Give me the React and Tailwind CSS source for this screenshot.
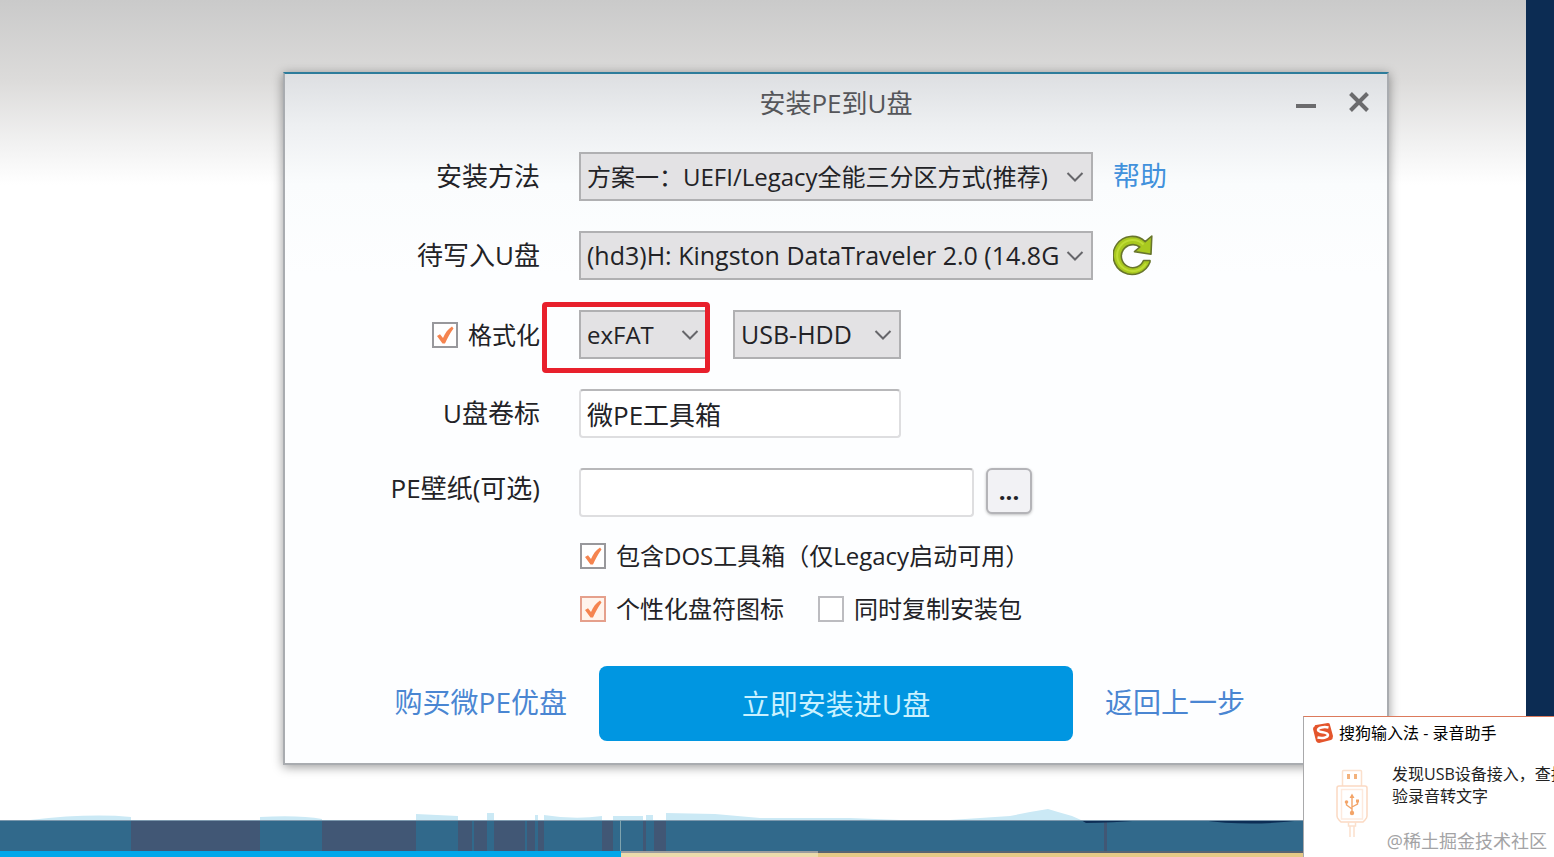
import { useState } from "react";

const methods = ["方案一：UEFI/Legacy全能三分区方式(推荐)"];
const drives = ["(hd3)H: Kingston DataTraveler 2.0 (14.8G"];

// darker blocks on the desktop strip: [x, width]
const shades = [
  [131, 129],
  [322, 94],
  [458, 14],
  [474, 13],
  [494, 31],
  [527, 8],
  [538, 6],
  [602, 11],
  [643, 3],
  [654, 12],
  [1104, 3],
];

function Select({ id, label, options, className }) {
  return (
    <div className={`relative ${className}`}>
      <select
        id={id}
        aria-label={label}
        className="block h-[49px] w-full appearance-none rounded-none border-2 border-[#b0b0b2] bg-[#e3e2e4] pl-1.5 pr-7 outline-none"
      >
        {options.map((option) => (
          <option key={option}>{option}</option>
        ))}
      </select>
      <svg
        viewBox="0 0 18 10"
        className="pointer-events-none absolute right-[9px] top-5 h-2.5 w-[18px]"
        fill="none"
        stroke="#66666a"
        strokeWidth="2"
      >
        <path d="M1.5 1 L9 8.5 L16.5 1" />
      </svg>
    </div>
  );
}

function Checkbox({ label, defaultChecked = false, tone = "border-[#98989c] bg-white" }) {
  const [checked, setChecked] = useState(defaultChecked);

  return (
    <label className="flex items-center gap-2.5 whitespace-nowrap text-2xl leading-[26px]">
      <span className="relative size-[26px] shrink-0">
        <input
          type="checkbox"
          checked={checked}
          onChange={(e) => setChecked(e.target.checked)}
          className={`block size-[26px] appearance-none border-2 ${tone}`}
        />
        {checked && (
          <svg viewBox="0 0 26 26" className="pointer-events-none absolute inset-0 size-[26px]">
            <path
              d="M5 14 L8 12.2 L11 16 C13 11 16 7 20 4.5 L21.5 6.5 C18 11 15.5 16 13 21.5 L10.5 21.5 Z"
              fill="#f5844f"
            />
          </svg>
        )}
      </span>
      {label}
    </label>
  );
}

function RefreshIcon() {
  return (
    <svg viewBox="0 0 40 41" className="h-[41px] w-10">
      <path
        d="M37 27 A19 19 0 1 1 32.2 6.6 L38.8 1 L38 19.2 L21.5 16.6 L26.8 12 A11.5 11.5 0 1 0 30.5 25.5 L37 25.5 Z"
        fill="#a9c91f"
        stroke="#68752c"
        strokeWidth="1.6"
        strokeLinejoin="round"
      />
      <path
        d="M33 28.5 A15.5 15.5 0 1 1 30.5 9.5"
        fill="none"
        stroke="#bfdc35"
        strokeWidth="2"
      />
    </svg>
  );
}

function Installer() {
  return (
    <section className="ml-[283px] mr-[137px] mt-[72px] border-2 border-[#a9acb0] border-t-[#2d7c9b] bg-[linear-gradient(to_bottom,#dddfe2_0px,#edeff1_50px,#fafcfd_110px,#fdfeff_200px)] pb-[22px] shadow-[0_2px_10px_rgba(0,0,0,0.4)]">
      <header className="grid h-[58px] grid-cols-[1fr_auto_1fr] items-center">
        <h1 className="col-start-2 text-[26px] text-[#55565a]">安装PE到U盘</h1>
        <div className="flex items-center justify-end gap-7 pr-4">
          <button type="button" aria-label="最小化" className="size-6">
            <svg viewBox="0 0 24 24" className="size-6" stroke="#6b6b6d" strokeWidth="4">
              <path d="M1 15 H21" />
            </svg>
          </button>
          <button type="button" aria-label="关闭" className="size-6">
            <svg viewBox="0 0 24 24" className="size-6" stroke="#6b6b6d" strokeWidth="4">
              <path d="M3.500 2.500 L20.500 19.500 M20.500 2.500 L3.500 19.500" />
            </svg>
          </button>
        </div>
      </header>

      <div className="mt-5 grid grid-cols-[255px_1fr] items-center gap-x-[39px] gap-y-[30px]">
        <label htmlFor="method" className="text-right text-[26px]">安装方法</label>
        <div className="flex items-center gap-5">
          <Select id="method" options={methods} className="w-[514px] text-2xl" />
          <a href="#help" className="text-[27px] text-[#4191dc]">帮助</a>
        </div>

        <label htmlFor="drive" className="text-right text-[26px]">待写入U盘</label>
        <div className="flex h-[49px] items-center gap-5">
          <Select id="drive" options={drives} className="w-[514px] text-[25px]" />
          <button type="button" aria-label="刷新">
            <RefreshIcon />
          </button>
        </div>

        <div className="flex justify-end">
          <Checkbox label="格式化" defaultChecked />
        </div>
        <div className="flex gap-[25px]">
          <div className="relative">
            <Select label="文件系统" options={["exFAT", "NTFS", "FAT32"]} className="w-[129px] text-2xl" />
            <div className="pointer-events-none absolute -bottom-3.5 -left-[37px] -right-0.5 -top-2 rounded-sm border-[5px] border-[#e8202c]" />
          </div>
          <Select label="启动模式" options={["USB-HDD", "USB-ZIP"]} className="w-[168px] text-[25px]" />
        </div>

        <label htmlFor="volume" className="text-right text-[26px]">U盘卷标</label>
        <input
          id="volume"
          type="text"
          defaultValue="微PE工具箱"
          className="h-[49px] w-[322px] rounded-sm border-2 border-[#dedee0] border-t-[#b8b8ba] bg-white px-1.5 text-[26px] outline-none"
        />

        <label htmlFor="wallpaper" className="pb-2 text-right text-[26px]">PE壁纸(可选)</label>
        <div className="flex gap-3">
          <input
            id="wallpaper"
            type="text"
            className="h-[49px] w-[395px] rounded-sm border-2 border-[#dedee0] border-t-[#b8b8ba] bg-white px-1.5 text-[26px] outline-none"
          />
          <button
            type="button"
            className="h-[46px] w-[46px] rounded-md border-2 border-[#b4b4b8] bg-[#f2f2f5] text-2xl font-bold shadow-[0_1px_3px_rgba(0,0,0,0.25)]"
          >
            ...
          </button>
        </div>
      </div>

      <div className="ml-[295px] mt-[26px] flex flex-col gap-[27px]">
        <Checkbox label="包含DOS工具箱（仅Legacy启动可用）" defaultChecked />
        <div className="flex gap-[34px]">
          <Checkbox label="个性化盘符图标" defaultChecked tone="border-[#e5a08c] bg-[#fff4ec]" />
          <Checkbox label="同时复制安装包" tone="border-[#bcbcc0] bg-white" />
        </div>
      </div>

      <footer className="mt-11 grid grid-cols-[1fr_474px_1fr] items-center gap-8 text-[28px]">
        <a href="#buy" className="pb-1 text-right text-[#4a86d2]">购买微PE优盘</a>
        <button type="button" className="h-[75px] rounded-lg bg-[#0096e1] text-[#c9f1ff]">
          立即安装进U盘
        </button>
        <a href="#back" className="pb-1 text-[#4a86d2]">返回上一步</a>
      </footer>
    </section>
  );
}

function DesktopStrip() {
  return (
    <svg viewBox="0 0 1526 49" preserveAspectRatio="none" className="mt-auto block h-[49px] w-full">
      <g fill="#cbe9f5">
        <path d="M30 12 Q90 5 131 9 V12 Z" />
        <path d="M260 9 Q300 7 322 11 V12 H260 Z" />
        <path d="M416 6 L458 8 V12 H416 Z" />
        <path d="M487 5 H494 V12 H487 Z M535 7 H538 V12 H535 Z" />
        <path d="M544 7 Q575 12 602 8 V12 H544 Z M613 8 H643 V12 H613 Z M646 7 H653 V12 H646 Z" />
        <path d="M666 5 L715 6 L760 10 L850 10 L900 12 H666 Z" />
        <path d="M950 12 L1010 8 L1030 4 L1048 1 L1058 4 L1072 8 L1081 12 Z" />
      </g>
      <rect y="12" width="1526" height="37" fill="#31698b" />
      {shades.map(([x, width]) => (
        <rect key={x} x={x} y="12" width={width} height="31" fill="#415775" />
      ))}
      <path d="M1081 12 H1146 Q1110 15 1086 15 Z M1200 12 H1304 Q1250 19 1200 12 Z" fill="#0c2d55" />
      <rect y="12" width="1526" height="1" fill="#7c98ad" />
      <rect x="620" y="12" width="1" height="31" fill="#7fa3ae" />
      <rect x="621" y="43" width="905" height="2" fill="#596372" />
      <rect x="621" y="43" width="197" height="3" fill="#9b9c9e" />
      <rect x="621" y="45" width="905" height="4" fill="#e6c986" />
      <rect x="621" y="45" width="197" height="4" fill="#ecdbac" />
      <rect y="43" width="621" height="6" fill="#00a7ea" />
    </svg>
  );
}

function Notification() {
  return (
    <aside className="absolute bottom-0 right-0 h-[141px] w-[251px] overflow-hidden border-l border-t border-l-[#a9a9ab] border-t-[#dc7a5c] bg-white text-base text-[#222]">
      <div className="flex items-center gap-1.5 whitespace-nowrap pl-[9px] pt-1">
        <svg viewBox="0 0 20 20" className="size-5">
          <path d="M2 3 Q1 2 3 2 L15 0 Q17 0 17 2 L20 13 Q20 16 18 17 L6 20 Q4 20 3 18 L0 6 Q0 4 2 3 Z" fill="#e4552c" />
          <path
            d="M15.5 4.5 C11 3.5 5 4.5 5 7 C5 10 15 8.5 15 12 C15 14.8 9 15.5 4.5 14.5"
            fill="none"
            stroke="#fff"
            strokeWidth="2.5"
          />
        </svg>
        <h2 className="text-black">搜狗输入法 - 录音助手</h2>
      </div>
      <div className="mt-[18px] flex gap-6 pl-8">
        <svg viewBox="0 0 32 72" className="mt-1.5 h-[72px] w-8 shrink-0" fill="none">
          <path d="M6.5 17 V2.5 Q6.5 1.5 7.5 1.5 H24.5 Q25.5 1.5 25.5 2.5 V17" stroke="#fbe0cc" strokeWidth="1.5" />
          <path d="M11 5 H14 V10 H11 Z M18 5 H21 V10 H18 Z" fill="#f3b27c" />
          <path d="M3 17 H29 Q31 17 31 19 V47 Q31 49 29 51 L27 53 H5 L3 51 Q1 49 1 47 V19 Q1 17 3 17 Z" stroke="#fbd9c2" strokeWidth="1.5" />
          <path d="M5.5 20.5 H26.5 V50 H5.5 Z" stroke="#fdeade" strokeWidth="1.5" />
          <path d="M12.5 53 V57 H19.5 V53 M14 57 V68 M18 57 V68" stroke="#fbe0cc" strokeWidth="1.5" />
          <path d="M16 28 V43 M10.5 34 V36 L16 40 M21.5 33 V35 L16 38" stroke="#f3a468" strokeWidth="1.4" />
          <path d="M16 24.5 L18.5 29 H13.5 Z M20 30.5 H23 V33.5 H20 Z" fill="#f3a468" />
          <circle cx="10.5" cy="33" r="1.8" fill="#f3a468" />
          <circle cx="16" cy="44" r="2.2" fill="#f3a468" />
        </svg>
        <p className="whitespace-nowrap leading-[22px]">
          发现USB设备接入，查找
          <br />
          验录音转文字
        </p>
      </div>
      <span className="absolute bottom-0.5 right-[7px] whitespace-nowrap text-lg leading-7 text-[#a3a3a5]">
        @稀土掘金技术社区
      </span>
    </aside>
  );
}

export default function App() {
  return (
    <div className="relative flex min-h-screen overflow-hidden bg-[#0c2c53] font-['Open_Sans','Noto_Sans_CJK_SC',sans-serif] text-[#222226]">
      <main className="mr-7 flex flex-1 flex-col bg-[linear-gradient(to_bottom,#cacaca_0px,#dcdbda_80px,#f2f2f2_145px,#ffffff_185px)]">
        <Installer />
        <DesktopStrip />
      </main>
      <Notification />
    </div>
  );
}
